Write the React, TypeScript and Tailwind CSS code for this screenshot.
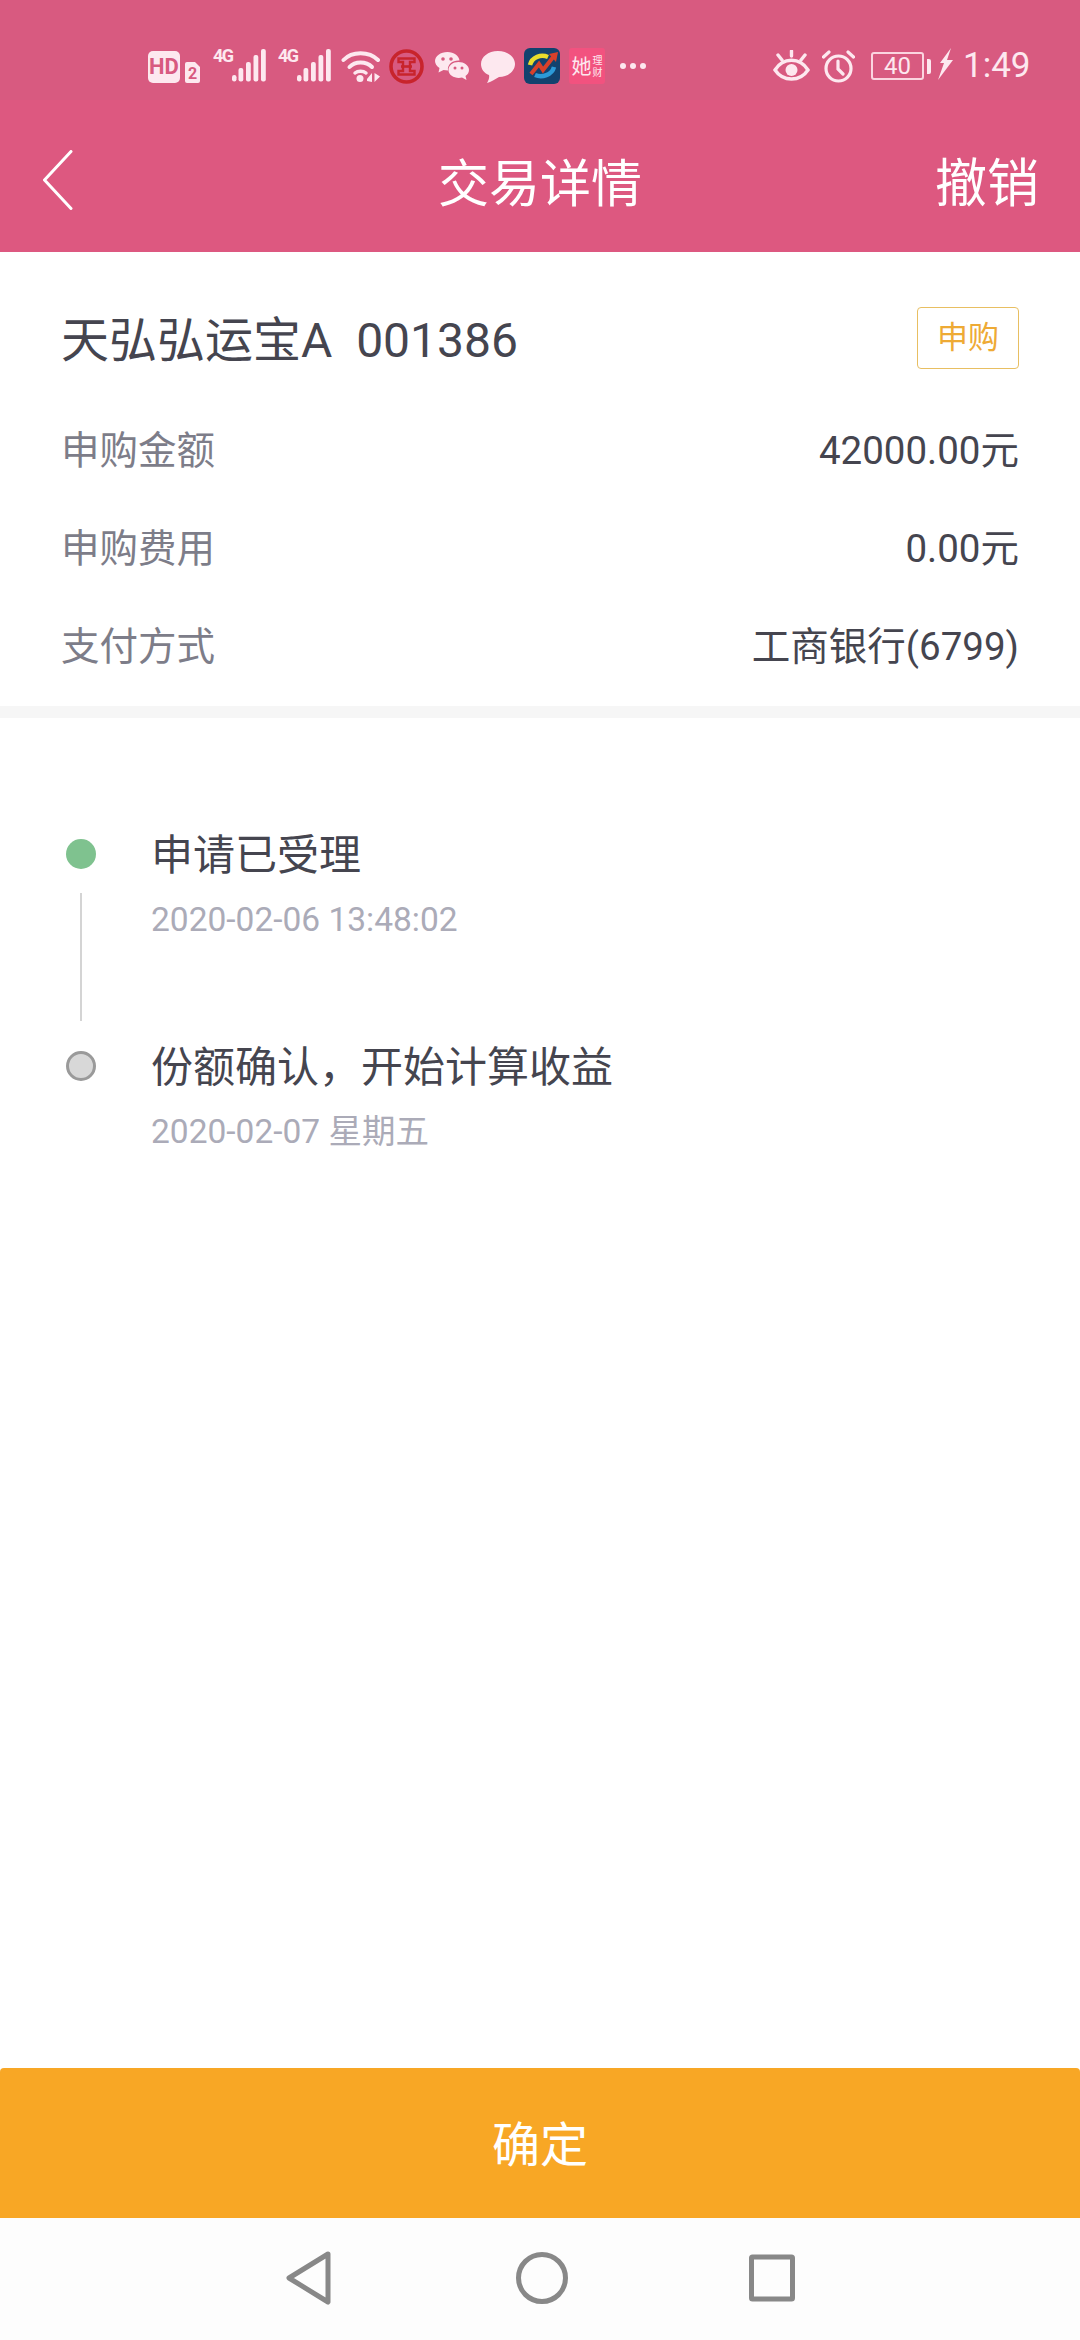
import React from 'react';

const FONT = "font-['Roboto','Noto_Sans_CJK_SC',sans-serif]";

const Signal: React.FC = () => (
  <div className="relative w-[53px] h-[33px]">
    <span className="absolute left-0 top-[-3px] text-[18px] leading-[20px] font-bold tracking-[-1.5px] text-[#fde8ef] font-['Roboto',sans-serif]">4G</span>
    <svg className="absolute left-0 top-0" width="53" height="33" viewBox="0 0 53 33" fill="#fde8ef">
      <rect x="19" y="26" width="4.5" height="6.5" rx="2.2" />
      <rect x="25.5" y="19" width="4.8" height="13.5" rx="2" />
      <rect x="33" y="13" width="4.8" height="19.5" rx="2" />
      <rect x="40.5" y="6" width="4.8" height="26.5" rx="2" />
      <rect x="48" y="0" width="4.8" height="32.5" rx="2" />
    </svg>
  </div>
);

const StatusBar: React.FC = () => (
  <div className="h-[100px] bg-[#d85a80] flex items-start pt-[50px] shrink-0">
    <div className="ml-[148px] mt-[1px] w-[32px] h-[32px] rounded-[5px] bg-[#fde8ef] flex items-center justify-center text-[#d85a80] text-[22px] font-bold leading-none font-['Roboto',sans-serif]">HD</div>
    <svg className="ml-[5px] mt-[12px]" width="15" height="21" viewBox="0 0 15 21">
      <path d="M2 0 H10 L15 5 V19 Q15 21 13 21 H2 Q0 21 0 19 V2 Q0 0 2 0 Z" fill="#fde8ef" />
      <text x="7.5" y="17" textAnchor="middle" fontSize="16" fontWeight="700" fontFamily="Roboto, sans-serif" fill="#d85a80">2</text>
    </svg>
    <div className="ml-[13px] mt-[-1px]"><Signal /></div>
    <div className="ml-[12px] mt-[-1px]"><Signal /></div>
    <svg className="ml-[10px]" width="40" height="33" viewBox="0 0 40 33" fill="none" stroke="#fde8ef" strokeWidth="4" strokeLinecap="round">
      <path d="M2.5 10 C11 1 28 1 37 10" />
      <path d="M8.5 17 C14 11 25 11 31 17" />
      <path d="M14 23 C17 20.5 22 20.5 25 23" strokeWidth="3.5" />
      <circle cx="19" cy="28.5" r="3.5" fill="#fde8ef" stroke="none" />
      <path d="M26 29 L31 23 L31 32 L26 31 Z M33.5 23 L33.5 32 L39 26.5 Z" fill="#fde8ef" stroke="none" />
    </svg>
    <svg className="ml-[8px] mt-[-1px]" width="35" height="35" viewBox="0 0 35 35" fill="none" stroke="#c8242c">
      <circle cx="17.5" cy="17.5" r="15.5" strokeWidth="3.6" />
      <path d="M9.5 9.5 H25.5 V13 H21 V22 H25.5 V25.5 H9.5 V22 H14 V13 H9.5 Z" strokeWidth="2.4" />
      <path d="M12 17.5 H23" strokeWidth="2.6" />
    </svg>
    <svg className="ml-[11px] mt-[2px]" width="34" height="30" viewBox="0 0 34 30">
      <path d="M12.5 0 C19 0 24 4 24.5 8.5 C18 8 12 12 13 18.5 C11.5 18.5 10 18.3 8.5 18 L3.5 20.5 L4.5 16 C1.5 14 0 11.5 0 9 C0 4 5.5 0 12.5 0 Z" fill="#fde8ef" />
      <path d="M23.5 10 C29 10 34 13.5 34 18 C34 20.5 32.5 22.5 30.5 24 L31.5 28 L27 25.5 C21 27 13.5 24 13.5 18 C13.5 13.5 18 10 23.5 10 Z" fill="#fde8ef" />
      <circle cx="8" cy="7" r="1.8" fill="#d85a80" /><circle cx="16" cy="7" r="1.8" fill="#d85a80" />
      <circle cx="20" cy="16" r="1.5" fill="#d85a80" /><circle cx="27" cy="16" r="1.5" fill="#d85a80" />
    </svg>
    <svg className="ml-[12px] mt-[1px]" width="34" height="32" viewBox="0 0 34 32" fill="#fde8ef">
      <path d="M17 0 C27 0 34 6 34 13 C34 20 27 26 18 26 C14 28 10 31 6 32 C8 29 8.5 26 8 24 C3 22 0 18 0 13 C0 6 7 0 17 0 Z" />
    </svg>
    <svg className="ml-[9px] mt-[-2px]" width="36" height="36" viewBox="0 0 36 36" fill="none">
      <rect width="36" height="36" rx="6" fill="#12426e" />
      <path d="M6 17 C8 9 17 6 24 9" stroke="#e9dc2c" strokeWidth="4.5" />
      <path d="M30 19 C28 27 18 30 11 27" stroke="#2c9ad8" strokeWidth="4.5" />
      <path d="M7 26 L15 16 L19 22 L30 8" stroke="#d8402a" strokeWidth="4" />
      <path d="M25 6 L34 4 L32 14 Z" fill="#d8402a" />
    </svg>
    <div className="ml-[9px] mt-[-2px] w-[36px] h-[36px] rounded-[3px] bg-[#f2527f] flex items-center justify-center gap-[1px] text-[#fde8ef] font-['Noto_Sans_CJK_SC',sans-serif]">
      <span className="text-[20px] leading-[24px]">她</span>
      <span className="w-[10px] flex flex-col items-center text-[10px] leading-[12px]"><span>理</span><span>财</span></span>
    </div>
    <div className="ml-[15px] mt-[13px] flex gap-[4px]">
      <span className="w-[6px] h-[6px] rounded-full bg-[#fde8ef]" />
      <span className="w-[6px] h-[6px] rounded-full bg-[#fde8ef]" />
      <span className="w-[6px] h-[6px] rounded-full bg-[#fde8ef]" />
    </div>
    <svg className="ml-[127px]" width="37" height="32" viewBox="0 0 37 32" fill="none" stroke="#fde8ef" strokeWidth="3.4" strokeLinecap="round">
      <path d="M2 20 C10 7 27 7 35 20 C27 32 10 32 2 20 Z" />
      <circle cx="18.5" cy="20" r="6" fill="#fde8ef" stroke="none" />
      <path d="M18.5 1 V6 M5 5 L9 10 M32 5 L28 10" />
    </svg>
    <svg className="ml-[12px]" width="33" height="33" viewBox="0 0 33 33" fill="none" stroke="#fde8ef" strokeWidth="3.2" strokeLinecap="round">
      <circle cx="16.5" cy="18.5" r="12.5" />
      <path d="M16 11 V19 L21 24 M1.5 7 L7 2 M31.5 7 L26 2" />
    </svg>
    <div className="ml-[16px] mt-[2px] w-[53px] h-[28px] rounded-[3px] border-2 border-[#fbd5e0] flex items-center justify-center text-[#fde8ef] text-[24px] leading-none font-normal font-['Roboto',sans-serif]">40</div>
    <div className="ml-[3px] mt-[9px] w-[4px] h-[15px] rounded-r-[2px] bg-[#fde8ef]" />
    <svg className="ml-[7px] mt-[-2px]" width="15" height="32" viewBox="0 0 15 32" fill="#fde8ef">
      <path d="M13 0 L2 15 H6 L0 32 L15 12 H9 L13 0 Z" />
    </svg>
    <div className="ml-[10px] mt-[-5px] text-[#fde8ef] text-[35px] leading-[41px] font-normal font-['Roboto',sans-serif]">1:49</div>
  </div>
);

const Header: React.FC = () => (
  <div className="h-[152px] bg-[#dd5880] relative flex items-start justify-center shrink-0">
    <svg className="absolute left-[42px] top-[50px]" width="32" height="60" viewBox="0 0 32 60" fill="none" stroke="#fff" strokeWidth="3" strokeLinecap="round" strokeLinejoin="round">
      <path d="M29 1.5 L2.5 30 L29 58.5" />
    </svg>
    <div className="mt-[57px] text-[51px] leading-[56px] text-white">交易详情</div>
    <div className="absolute right-[41px] top-[55px] text-[52px] leading-[60px] text-white">撤销</div>
  </div>
);

const Row: React.FC<{ label: string; value: string }> = ({ label, value }) => (
  <div className="h-[98px] pt-[2px] flex items-center justify-between">
    <span className="text-[38.5px] text-[#7d7d89]">{label}</span>
    <span className="text-[38.5px] text-[#45454f]">{value}</span>
  </div>
);

const App: React.FC = () => {
  return (
    <div className={`w-[1080px] h-[2340px] bg-white flex flex-col ${FONT}`}>
      <StatusBar />
      <Header />

      <div className="px-[61px] pt-[55px] pb-[11px]">
        <div className="h-[62px] mb-[32px] flex items-center justify-between">
          <span className="pt-[5px] text-[48px] leading-[62px] text-[#45454f]">天弘弘运宝A&nbsp;&nbsp;001386</span>
          <span className="w-[102px] h-[62px] rounded-[4px] border-[1.5px] border-[#e8bf62] flex items-center justify-center text-[31px] text-[#eeaa35]">申购</span>
        </div>
        <Row label="申购金额" value="42000.00元" />
        <Row label="申购费用" value="0.00元" />
        <Row label="支付方式" value="工商银行(6799)" />
      </div>
      <div className="h-[12px] bg-[#f6f6f6]" />

      <div className="pt-[107px] pl-[66px] flex-1">
        <div className="h-[212px] flex">
          <div className="w-[30px] pt-[14px] flex flex-col items-center">
            <span className="w-[30px] h-[30px] rounded-full bg-[#7fc28f]" />
            <span className="mt-[24px] w-[2px] h-[128px] bg-[#d4d4d4]" />
          </div>
          <div className="ml-[55px] pt-[1px]">
            <div className="text-[42px] leading-[60px] text-[#45454f]">申请已受理</div>
            <div className="mt-[12px] text-[33.5px] leading-[44px] text-[#ababb8]">2020-02-06 13:48:02</div>
          </div>
        </div>
        <div className="flex">
          <div className="w-[30px] pt-[14px]">
            <span className="block w-[30px] h-[30px] rounded-full bg-[#d8d8d8] border-[3px] border-[#9a9a9a]" />
          </div>
          <div className="ml-[55px] pt-[1px]">
            <div className="text-[42px] leading-[60px] text-[#45454f]">份额确认，开始计算收益</div>
            <div className="mt-[12px] text-[33.5px] leading-[44px] text-[#ababb8]">2020-02-07 星期五</div>
          </div>
        </div>
      </div>

      <div className="h-[150px] pt-[5px] rounded-t-[4px] bg-[#f8a725] flex items-center justify-center text-[48px] text-white shrink-0">确定</div>

      <div className="h-[122px] bg-[#fdfdfd] relative shrink-0">
        <svg className="absolute left-[285px] top-[33px]" width="48" height="54" viewBox="0 0 48 54" fill="none" stroke="#888" strokeWidth="5" strokeLinejoin="round">
          <path d="M43 3 L4 27 L43 51 Z" />
        </svg>
        <svg className="absolute left-[515px] top-[33px]" width="54" height="54" viewBox="0 0 54 54" fill="none" stroke="#888" strokeWidth="5">
          <circle cx="27" cy="27" r="23.5" />
        </svg>
        <svg className="absolute left-[747px] top-[36px]" width="50" height="48" viewBox="0 0 50 48" fill="none" stroke="#888" strokeWidth="5" strokeLinejoin="round">
          <rect x="4.5" y="3" width="41" height="42" rx="1" />
        </svg>
      </div>
    </div>
  );
};

export default App;
